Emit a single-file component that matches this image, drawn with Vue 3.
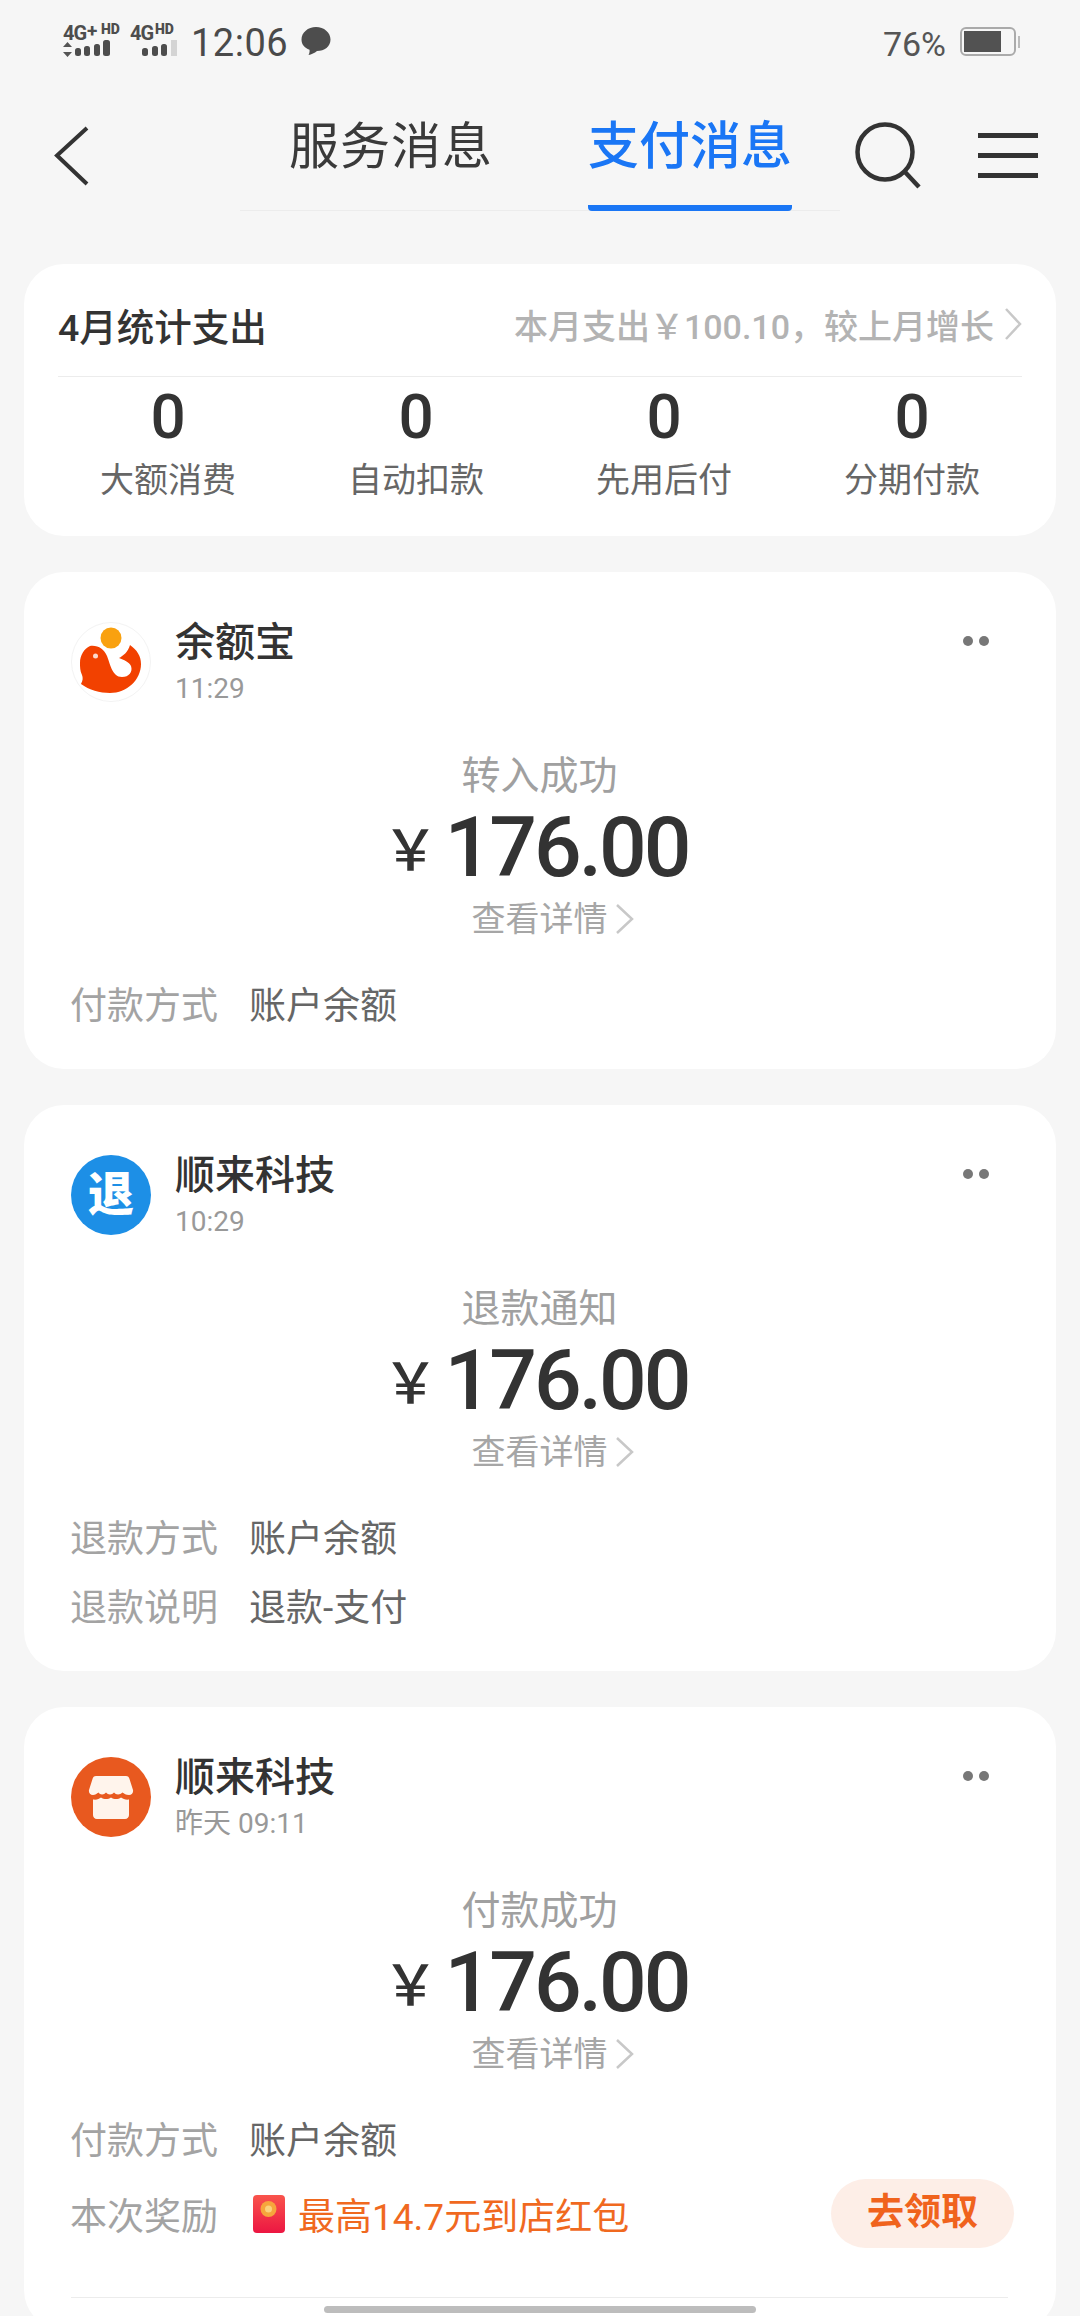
<script setup>
const stats = [
  { label: '大额消费', value: 0 },
  { label: '自动扣款', value: 0 },
  { label: '先用后付', value: 0 },
  { label: '分期付款', value: 0 }
]

const cards = [
  {
    icon: 'fish', name: '余额宝', time: '11:29', status: '转入成功',
    rows: [{ label: '付款方式', value: '账户余额' }]
  },
  {
    icon: 'refund', name: '顺来科技', time: '10:29', status: '退款通知',
    rows: [
      { label: '退款方式', value: '账户余额' },
      { label: '退款说明', value: '退款-支付' }
    ]
  },
  {
    icon: 'store', name: '顺来科技', time: '昨天 09:11', status: '付款成功',
    rows: [{ label: '付款方式', value: '账户余额' }],
    reward: '最高14.7元到店红包'
  }
]
</script>

<template>
  <div class="page">
    <!-- status bar -->
    <div class="status">
      <svg class="signal" width="115" height="44" viewBox="0 -10 115 44">
        <text x="0" y="16" class="net">4G</text>
        <text x="24" y="13" class="net small">+</text>
        <text x="38" y="10" class="net tiny">HD</text>
        <path d="M4.500 18l4.500 5H0zM4.500 33l4.500-5H0z" fill="#555" />
        <rect x="12" y="24" width="6" height="8" rx="2.500" fill="#4d4d4d" />
        <rect x="21" y="22" width="6" height="10" rx="2.500" fill="#4d4d4d" />
        <rect x="31" y="20" width="6" height="12" rx="2.500" fill="#4d4d4d" />
        <rect x="40" y="16" width="7" height="16" rx="2.500" fill="#4d4d4d" />
        <text x="67" y="16" class="net">4G</text>
        <text x="92" y="10" class="net tiny">HD</text>
        <rect x="79" y="24" width="6" height="8" rx="2.500" fill="#4d4d4d" />
        <rect x="89" y="22" width="6" height="10" rx="2.500" fill="#4d4d4d" />
        <rect x="98" y="20" width="6" height="12" rx="2.500" fill="#4d4d4d" />
        <rect x="108" y="16" width="6" height="16" fill="#d4d4d4" />
      </svg>
      <span class="clock">12:06</span>
      <svg class="bubble" width="30" height="29" viewBox="0 0 30 29">
        <path d="M15 0C23 0 29.500 5.500 29.500 12.500C29.500 19.500 23.500 24 16 24C13.500 26 10.500 27.500 7.500 28C8.500 26.300 8.800 24.500 8.500 22.800C3.500 21 .5 17.300 .5 12.500C.5 5.500 7 0 15 0Z" fill="#4d4d4d" />
      </svg>
      <span class="percent">76%</span>
      <div class="battery"><div class="battery-fill"></div></div>
      <div class="battery-nub"></div>
    </div>

    <!-- nav -->
    <div class="nav">
      <svg class="back" width="35" height="60" viewBox="0 0 35 60">
        <path d="M33 2L3 29.500L33 58" fill="none" stroke="#333" stroke-width="4" />
      </svg>
      <div class="tabs">
        <div class="tab">服务消息</div>
        <div class="tab active">支付消息</div>
      </div>
      <svg class="search" width="70" height="75" viewBox="0 0 70 75">
        <circle cx="32" cy="36" r="27.500" fill="none" stroke="#333" stroke-width="4.500" />
        <path d="M52 56L66 71" fill="none" stroke="#333" stroke-width="4.500" />
      </svg>
      <div class="menu"><i></i><i></i><i></i></div>
    </div>

    <!-- month summary -->
    <section class="summary">
      <div class="summary-head">
        <span class="summary-title">4月统计支出</span>
        <span class="summary-note">本月支出￥100.10，较上月增长</span>
        <svg class="note-arrow" width="18" height="34" viewBox="0 0 18 34">
          <path d="M2 2L16 17L2 32" fill="none" stroke="#c8c8c8" stroke-width="2.500" />
        </svg>
      </div>
      <div class="stats">
        <div v-for="s in stats" :key="s.label" class="stat">
          <div class="stat-value">{{ s.value }}</div>
          <div class="stat-label">{{ s.label }}</div>
        </div>
      </div>
    </section>

    <!-- messages -->
    <section v-for="(c, i) in cards" :key="i" class="card">
      <div class="card-head">
        <div class="logo">
          <svg v-if="c.icon === 'fish'" width="80" height="80" viewBox="0 0 80 80">
            <circle cx="40" cy="40" r="39.500" fill="#fff" stroke="#f3f3f3" />
            <circle cx="40" cy="16" r="10.500" fill="#f9a10f" />
            <path d="M19 24C27 23 33 27 36 34C39 41 41 55 51 55C58 55 62 50 60 44C58 40 53 38 48 36C52 34 57 30 59 23C66 28 70 34 70 42C70 58 56 71 39 71C29 71 18 68 10 62C12 58 12 56 11 53C9 49 9 45 9 41C9 33 13 27 19 24Z" fill="#f24100" />
            <circle cx="24.500" cy="34" r="2.500" fill="#fbd9cc" />
          </svg>
          <div v-else-if="c.icon === 'refund'" class="logo-refund">退</div>
          <svg v-else width="80" height="80" viewBox="0 0 80 80">
            <circle cx="40" cy="40" r="40" fill="#e8591f" />
            <path d="M25 19H55C57 19 58 20 58.500 22L62 33C62.500 36 61 38 58 38C55 38 53 36.500 51.500 35.500C49 38 45 38 43 35.500C41 38 37 38 35 35.500C33 38 29 38 27.500 35.500C26 36.500 24 38 22 38C19 38 17.500 36 18 33L21.500 22C22 20 23 19 25 19Z" fill="#fff4ec" />
            <path d="M22 42.500C26 43 28 42 30 40.500C33 42.500 37 42.500 40 40.500C43 42.500 47 42.500 50 40.500C52 42 55 43 58 42.500V58C58 60 56.500 62 54 62H26C23.500 62 22 60 22 58Z" fill="#fff4ec" />
          </svg>
        </div>
        <div class="head-text">
          <div class="name">{{ c.name }}</div>
          <div class="time">{{ c.time }}</div>
        </div>
        <div class="dots"><i></i><i></i></div>
      </div>

      <div class="state">{{ c.status }}</div>
      <div class="amount"><span class="yen">￥</span>176.00</div>
      <div class="detail">
        查看详情
        <svg width="20" height="32" viewBox="0 0 20 32">
          <path d="M2 2L17 16L2 30" fill="none" stroke="#c8c8c8" stroke-width="2.500" />
        </svg>
      </div>

      <div class="rows">
        <div v-for="r in c.rows" :key="r.label" class="row">
          <span class="row-label">{{ r.label }}</span>
          <span class="row-value">{{ r.value }}</span>
        </div>
        <div v-if="c.reward" class="row reward">
          <span class="row-label">本次奖励</span>
          <svg class="packet" width="32" height="38" viewBox="0 0 32 38">
            <defs>
              <linearGradient id="packetRed" x1="0" y1="0" x2="0" y2="1">
                <stop offset="0" stop-color="#f9544c" />
                <stop offset="1" stop-color="#ec1642" />
              </linearGradient>
            </defs>
            <rect width="32" height="38" rx="4" fill="url(#packetRed)" />
            <circle cx="15.500" cy="14" r="8" fill="#f6a53c" />
            <circle cx="15.500" cy="14" r="3.500" fill="#fbd27c" />
          </svg>
          <span class="reward-text">{{ c.reward }}</span>
          <span class="claim">去领取</span>
        </div>
      </div>
      <div v-if="c.reward" class="card-rule"></div>
    </section>

    <div class="home-bar"></div>
  </div>
</template>

<style scoped>
.page {
  position: relative;
  height: 2316px;
  overflow: hidden;
  background: #f6f6f6;
  font-family: Roboto, "Noto Sans CJK SC", sans-serif;
  color: #333;
}

/* status */
.status {
  height: 84px;
  display: flex;
  align-items: flex-start;
  padding: 24px 0 0 63px;
  box-sizing: border-box;
}
.signal { flex: none; margin-top: -10px; }
.net { font: 700 20px Roboto, sans-serif; fill: #4d4d4d; letter-spacing: -1px; }
.net.small { font-size: 19px; }
.net.tiny { font-size: 14px; font-weight: 900; letter-spacing: 0; }
.clock {
  margin-left: 13px;
  font-size: 38px;
  line-height: 38px;
  color: #4a4a4a;
  letter-spacing: .5px;
}
.bubble { margin: 3px 0 0 13px; }
.percent {
  margin-left: auto;
  font-size: 34px;
  line-height: 38px;
  margin-top: 1px;
  color: #555;
}
.battery {
  margin: 3px 0 0 14px;
  width: 56px;
  height: 29px;
  box-sizing: border-box;
  border: 2px solid #aaa;
  border-radius: 6px;
  padding: 2px;
}
.battery-fill { width: 37px; height: 21px; background: #525252; }
.battery-nub {
  width: 2px;
  height: 12px;
  margin: 12px 60px 0 2px;
  background: #bbb;
}

/* nav */
.nav {
  height: 127px;
  display: flex;
  align-items: flex-start;
}
.back { margin: 42px 0 0 54px; flex: none; }
.tabs {
  margin-left: 151px;
  width: 600px;
  height: 127px;
  flex: none;
  box-sizing: border-box;
  padding-left: 49px;
  display: flex;
  gap: 95px;
  border-bottom: 1px solid #ececec;
}
.tab {
  height: 127px;
  line-height: 126px;
  font-size: 50px;
  color: #3a3a3a;
  letter-spacing: 1px;
  white-space: nowrap;
}
.tab.active {
  width: 204px;
  font-size: 51px;
  color: #1a76f5;
  font-weight: 500;
  letter-spacing: 0;
  text-align: center;
  border-bottom: 6px solid #1a76f5;
  border-radius: 0 0 4px 4px;
  box-sizing: border-box;
}
.search { margin: 32px 0 0 13px; flex: none; }
.menu {
  margin: 49px 0 0 55px;
  width: 60px;
  height: 45px;
  flex: none;
  display: flex;
  flex-direction: column;
  justify-content: space-between;
}
.menu i { display: block; height: 5px; background: #333; }

/* summary */
.summary {
  margin: 53px 24px 0;
  height: 272px;
  padding: 0 34px;
  box-sizing: border-box;
  background: #fff;
  border-radius: 40px;
}
.summary-head {
  height: 113px;
  padding-top: 8px;
  box-sizing: border-box;
  display: flex;
  align-items: center;
  border-bottom: 1px solid #ececec;
}
.summary-title { font-size: 37.5px; font-weight: 500; color: #333; }
.summary-note {
  margin-left: auto;
  font-size: 34px;
  color: #b3b3b3;
  font-weight: 500;
}
.note-arrow { margin-left: 10px; }
.stats {
  margin: 5px -14px 0;
  display: grid;
  grid-template-columns: repeat(4, 1fr);
  text-align: center;
}
.stat-value { font-size: 62px; line-height: 70px; font-weight: 500; color: #333; }
.stat-label { font-size: 34px; line-height: 46px; margin-top: 5px; color: #666; }

/* message card */
.card {
  margin: 36px 24px 0;
  padding: 44px 48px 32px 47px;
  background: #fff;
  border-radius: 40px;
}
.card-head { display: flex; align-items: flex-start; }
.logo { flex: none; width: 80px; height: 80px; margin-top: 6px; }
.logo svg { display: block; }
.logo-refund {
  width: 80px;
  height: 80px;
  border-radius: 50%;
  background: #1d8fe6;
  color: #fff;
  font-size: 46px;
  font-weight: 900;
  line-height: 78px;
  text-align: center;
}
.head-text { margin-left: 24px; }
.name { font-size: 40px; line-height: 54px; font-weight: 500; color: #333; }
.time { font-size: 28px; line-height: 38px; color: #999; }
.dots { margin: 20px 0 0 auto; padding-right: 19px; display: flex; gap: 6px; }
.dots i { display: block; width: 10px; height: 10px; border-radius: 50%; background: #777; }

.state {
  margin-top: 43px;
  text-align: center;
  font-size: 39px;
  line-height: 50px;
  color: #a0a0a0;
}
.amount {
  margin-top: 2px;
  display: flex;
  justify-content: center;
  align-items: center;
  font-size: 84px;
  line-height: 90px;
  font-weight: 500;
  letter-spacing: -3px;
  color: #333;
}
.yen { font-size: 56px; line-height: 52px; font-weight: 500; letter-spacing: 0; margin-left: -8px; margin-right: 6px; margin-top: 6px; }
.detail {
  margin-top: 1px;
  padding-left: 27px;
  display: flex;
  justify-content: center;
  align-items: center;
  gap: 7px;
  font-size: 34px;
  line-height: 50px;
  color: #a6a6a6;
}
.rows { margin: 24px 0 0 -1px; }
.row {
  display: flex;
  align-items: center;
  height: 69px;
  font-size: 37px;
}
.row-label { width: 146px; color: #a3a3a3; flex: none; white-space: nowrap; }
.row-value { margin-left: 33px; color: #666; }
.reward { margin-top: 7px; }
.packet { margin-left: 37px; flex: none; }
.reward-text { margin-left: 13px; color: #f0691f; }
.claim {
  margin-left: auto;
  margin-right: -6px;
  width: 183px;
  height: 69px;
  flex: none;
  border-radius: 35px;
  background: #fdeee7;
  color: #f0631d;
  font-size: 37px;
  font-weight: 700;
  line-height: 67px;
  text-align: center;
}
.card-rule { margin-top: 49px; height: 1px; background: #ececec; }

.home-bar {
  position: absolute;
  left: 324px;
  top: 2306px;
  width: 432px;
  height: 7px;
  border-radius: 4px;
  background: #bdbdbd;
}
</style>
